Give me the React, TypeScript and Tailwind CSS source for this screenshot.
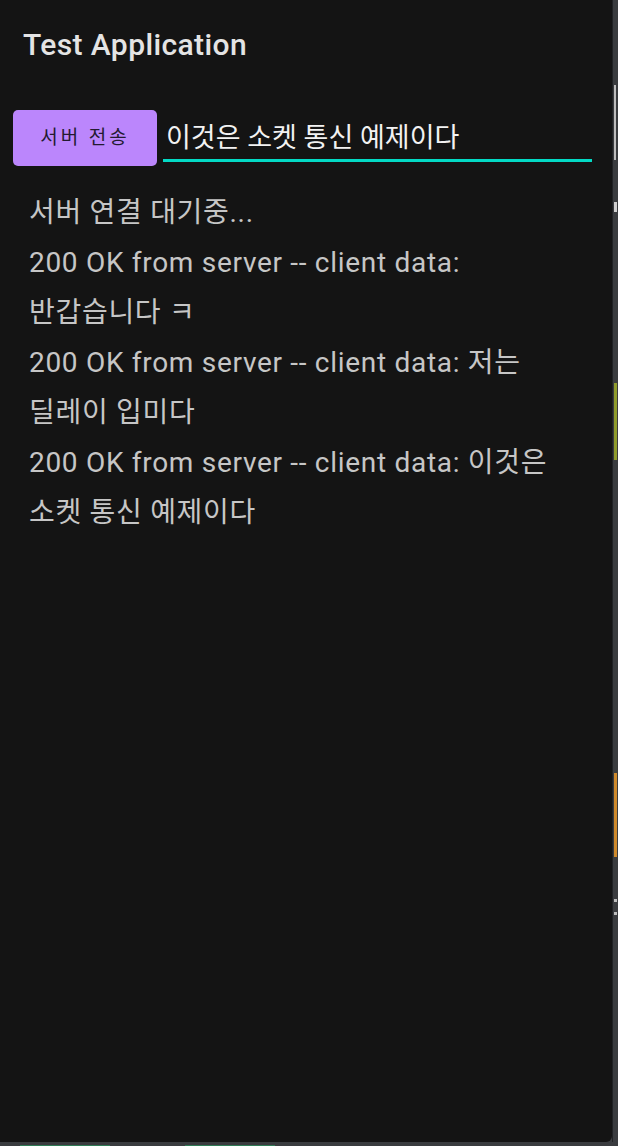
const logs = [
  "서버 연결 대기중...",
  "200 OK from server -- client data: 반갑습니다 ㅋ",
  "200 OK from server -- client data: 저는 딜레이 입미다",
  "200 OK from server -- client data: 이것은 소켓 통신 예제이다",
];

export default function App() {
  return (
    <div className="flex h-[1146px] w-[618px] flex-col bg-[#3a3c3f] font-['Roboto','Noto_Sans_CJK_KR',sans-serif]">
      <div className="flex flex-1">
        {/* Main panel */}
        <div className="flex flex-1 flex-col rounded-br-[6px] bg-[#141414]">
          {/* Title bar */}
          <div className="flex h-[88px] items-center px-[23px]">
            <h1 className="text-[30px] font-medium tracking-[0.4px] text-[#e4e4e4]">Test Application</h1>
          </div>

          {/* Send row */}
          <div className="mt-[22px] flex items-stretch pl-[13px] pr-[20px]">
            <button className="h-[56px] w-[144px] rounded-[5px] bg-[#bb86fc] text-[19px] tracking-[3px] text-[#231a30]">
              서버 전송
            </button>
            <div className="mb-[4px] ml-[6px] flex flex-1 flex-col justify-end">
              <div className="px-[3px] pb-[5px] text-[27px] leading-[32px] break-keep text-[#f2f2f2]">
                이것은 소켓 통신 예제이다
              </div>
              <div className="h-[3px] bg-[#03dac5]" />
            </div>
          </div>

          {/* Log output */}
          <div className="mt-[22px] pl-[29px] pr-[29px] text-[28px] leading-[50px] tracking-[0.7px] break-keep text-[#c6c6c6]">
            {logs.map((line, i) => (
              <p key={i}>{line}</p>
            ))}
          </div>
        </div>

        {/* Right edge strip */}
        <div className="flex w-[6px] flex-col border-l border-[#202225] pl-[1px]">
          <div className="mt-[85px] h-[75px] w-[2px] bg-[#bdbdbd]" />
          <div className="mt-[42px] h-[10px] w-[3px] bg-[#d0d0d0]" />
          <div className="mt-[171px] h-[77px] w-[3px] bg-[#8f9b2c]" />
          <div className="mt-[313px] h-[84px] w-[3px] bg-[#cf8a2c]" />
          <div className="mt-[42px] h-[3px] w-[3px] bg-[#bdbdbd]" />
          <div className="mt-[10px] h-[3px] w-[3px] bg-[#bdbdbd]" />
        </div>
      </div>

      {/* Bottom edge */}
      <div className="flex h-[4px] items-end">
        <div className="ml-[20px] h-[1px] w-[90px] bg-[#2f7a55]" />
        <div className="ml-[75px] h-[1px] w-[90px] bg-[#2f7a55]" />
      </div>
    </div>
  );
}
